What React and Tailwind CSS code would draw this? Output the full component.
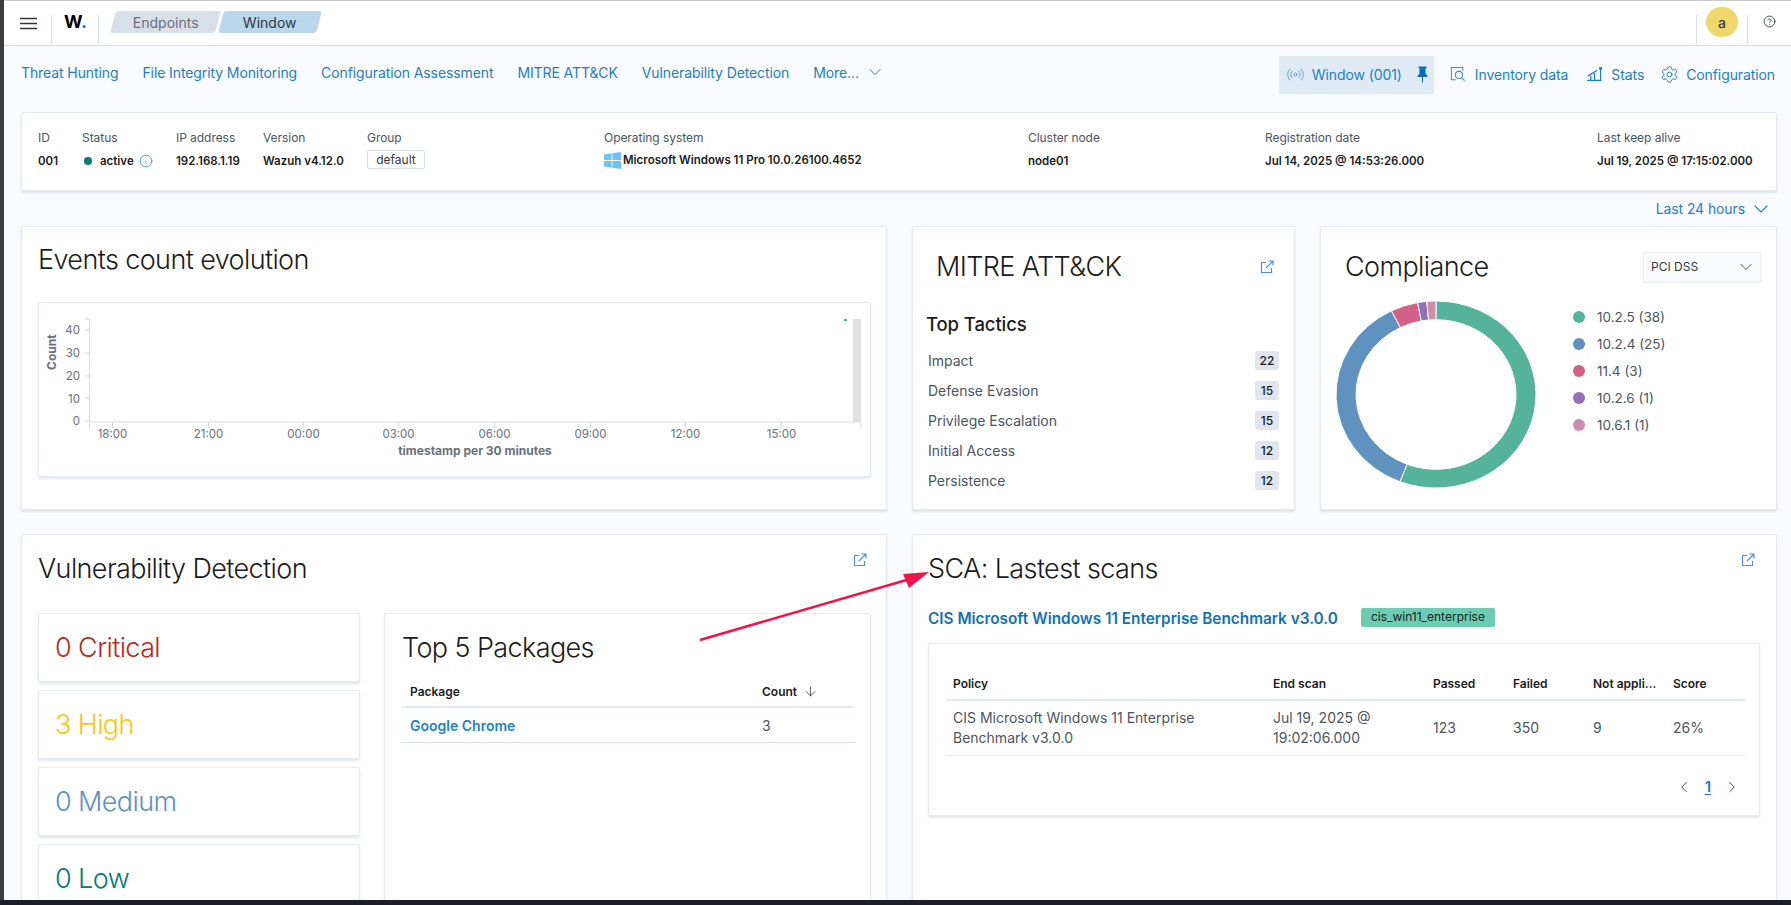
import { ChevronDown, ChevronLeft, ChevronRight, CircleHelp, Info, Radio, Settings, ArrowDown } from "lucide-react";

const navLinks = [
  "Threat Hunting",
  "File Integrity Monitoring",
  "Configuration Assessment",
  "MITRE ATT&CK",
  "Vulnerability Detection",
];

const tactics = [
  { name: "Impact", count: 22 },
  { name: "Defense Evasion", count: 15 },
  { name: "Privilege Escalation", count: 15 },
  { name: "Initial Access", count: 12 },
  { name: "Persistence", count: 12 },
];

const compliance = [
  { label: "10.2.5 (38)", value: 38, color: "#54B399" },
  { label: "10.2.4 (25)", value: 25, color: "#6092C0" },
  { label: "11.4 (3)", value: 3, color: "#D36086" },
  { label: "10.2.6 (1)", value: 1, color: "#9170B8" },
  { label: "10.6.1 (1)", value: 1, color: "#CA8EAE" },
];

const xTicks = [
  { x: 112, t: "18:00" },
  { x: 208, t: "21:00" },
  { x: 303, t: "00:00" },
  { x: 398, t: "03:00" },
  { x: 494, t: "06:00" },
  { x: 590, t: "09:00" },
  { x: 685, t: "12:00" },
  { x: 781, t: "15:00" },
];

const PopoutIcon = () => (
  <svg width="14" height="14" viewBox="0 0 14 14" fill="none" stroke="#4a94d0" strokeWidth="1.2">
    <path d="M6 2.5H1.5v10h10V8" />
    <path d="M6 8l6.5-6.5M8.5 1h4.5v4.5" />
  </svg>
);

const InventoryIcon = () => (
  <svg width="16" height="16" viewBox="0 0 17 17" fill="none" stroke="#3f8fcc" strokeWidth="1.1">
    <path d="M6 14.5H1.5V1.5h12V5" />
    <path d="M4 4h.01M6.5 4h.01M9 4h.01M11.5 4h.01M4 6.5h.01M4 9h.01M4 11.5h.01" strokeWidth="1.4" />
    <circle cx="9.5" cy="9.5" r="3.8" />
    <path d="M12.3 12.3l3.2 3.2" />
  </svg>
);

const StatsIcon = () => (
  <svg width="15" height="14" viewBox="0 0 16 15" fill="none" stroke="#1f7fc4" strokeWidth="1.3">
    <path d="M0 14.3h15.5M1 9.5l10-6M8 6.5v7.5M14.5 2v12" />
    <path d="M4 9v5" />
    <circle cx="14.5" cy="1.5" r="1" fill="#1f7fc4" />
  </svg>
);

const WindowsIcon = () => (
  <svg width="17" height="17" viewBox="0 0 17 17" fill="#6cc4f0">
    <path d="M0 2.4L7.6 1.3v6.8H0zM8.4 1.2L17 0v8.1H8.4zM0 8.9h7.6v6.8L0 14.6zM8.4 8.9H17V17l-8.6-1.2z" />
  </svg>
);

const Panel = ({ className, children }) => (
  <div className={`bg-white border border-[#e4e9f2] rounded-[2px] shadow-[0_2px_2px_rgba(152,162,179,0.25)] ${className}`}>
    {children}
  </div>
);

const Label = ({ children, className = "" }) => (
  <div className={`text-[12px] leading-[16px] text-[#4b5563] tracking-[-0.05px] ${className}`}>{children}</div>
);

const Value = ({ children, className = "" }) => (
  <div className={`text-[11.5px] leading-[16px] font-semibold text-[#1a1c21] ${className}`}>{children}</div>
);

const Title = ({ children, className = "" }) => (
  <h2 className={`text-[27px] leading-[32px] font-light text-[#1a1c21] tracking-[-0.6px] ${className}`}>{children}</h2>
);

const EventsChart = () => (
  <svg width="830" height="172" className="block">
    <g transform="translate(-39,-303)" fontFamily="Inter, sans-serif">
      <path d="M89.5 319V428M861 422v6" stroke="#d3dae6" fill="none" />
      <path d="M85 319h4M85 330h4M85 353h4M85 376h4M85 398h4M85 421h4" stroke="#d3dae6" />
      <path d="M90 422H861" stroke="#e6e9ef" strokeWidth="1.5" />
      {[40, 30, 20, 10, 0].map((v, i) => (
        <text key={v} x="80" y={[334, 357, 380, 403, 425][i]} fontSize="11.5" fill="#69707d" textAnchor="end">
          {v}
        </text>
      ))}
      {xTicks.map((tick) => (
        <g key={tick.t}>
          <path d={`M${tick.x + 0.5} 422v6`} stroke="#d3dae6" />
          <text x={tick.x + 0.5} y="438" fontSize="11.5" fill="#69707d" textAnchor="middle">
            {tick.t}
          </text>
        </g>
      ))}
      <rect x="853" y="319" width="8" height="103" fill="#e2e2e2" />
      <rect x="844" y="319" width="3" height="2" fill="#54B399" />
      <text x="475" y="455" fontSize="12" fontWeight="700" fill="#69707d" textAnchor="middle">
        timestamp per 30 minutes
      </text>
      <text transform="translate(56,370) rotate(-90)" fontSize="12" fontWeight="700" fill="#69707d">
        Count
      </text>
    </g>
  </svg>
);

const Donut = () => {
  const total = compliance.reduce((acc, item) => acc + item.value, 0);
  let angle = 0;
  const outer = 100;
  const inner = 80;
  const pt = (r, a) => [100 + r * Math.sin(a), 100 - r * Math.cos(a)];
  return (
    <svg width="200" height="187" viewBox="0 0 200 200" preserveAspectRatio="none" className="block">
      {compliance.map((item) => {
        const start = angle;
        const end = angle + (item.value / total) * Math.PI * 2;
        angle = end;
        const large = end - start > Math.PI ? 1 : 0;
        const [x1, y1] = pt(outer, start);
        const [x2, y2] = pt(outer, end);
        const [x3, y3] = pt(inner, end);
        const [x4, y4] = pt(inner, start);
        return (
          <path
            key={item.label}
            d={`M${x1} ${y1}A${outer} ${outer} 0 ${large} 1 ${x2} ${y2}L${x3} ${y3}A${inner} ${inner} 0 ${large} 0 ${x4} ${y4}Z`}
            fill={item.color}
            stroke="#fff"
            strokeWidth="1"
          />
        );
      })}
    </svg>
  );
};

const SeverityCard = ({ text, color, className = "" }) => (
  <Panel className={`h-[69px] flex items-center pl-[16px] ${className}`}>
    <span className={`text-[27px] font-light leading-[32px] tracking-[-0.6px] ${color}`}>{text}</span>
  </Panel>
);

export default function App() {
  return (
    <div
      className="relative h-[905px] overflow-hidden flex flex-col bg-[#f9fafd]"
      style={{ fontFamily: "Inter, 'Noto Sans', sans-serif" }}
    >
      <div className="flex flex-1 min-h-0">
        <div className="w-[4px] shrink-0 bg-[#3d3d3f]" />
        <div className="flex-1 min-w-0">
          {/* Top bar */}
          <div className="h-[46px] bg-white border-t border-[#c9c9c9] border-b border-b-[#d8dee9] flex items-center">
            <div className="w-[47px] flex justify-center pl-[1px]">
              <svg width="17" height="13" viewBox="0 0 17 13" stroke="#343741" strokeWidth="1.6">
                <path d="M0 1.5h17M0 6.5h17M0 11.5h17" />
              </svg>
            </div>
            <div className="h-[30px] border-l border-[#d8dee9] self-end w-[47px] relative">
              <span className="absolute -top-[8px] left-[12px] text-[18px] font-bold text-black leading-[30px]">
                W<span className="text-[#0a7cff]">.</span>
              </span>
            </div>
            <div className="h-[30px] border-l border-[#d8dee9] self-end" />
            <div className="flex ml-[14px] mb-[2px]">
              <div className="w-[105px] h-[22px] bg-[#d9dfe9] rounded-[3px] -skew-x-[15deg] flex items-center justify-center">
                <span className="skew-x-[15deg] text-[14px] text-[#69707d]">Endpoints</span>
              </div>
              <div className="w-[98px] h-[22px] bg-[#b9d6ea] rounded-[3px] -skew-x-[15deg] flex items-center justify-center ml-[3px]">
                <span className="skew-x-[15deg] text-[14px] text-[#343741]">Window</span>
              </div>
            </div>
            <div className="flex-1" />
            <div className="h-[30px] border-l border-[#d8dee9] self-end" />
            <div className="w-[50px] flex justify-center mb-[2px]">
              <div className="w-[32px] h-[30px] rounded-full bg-[#f0d76c] flex items-center justify-center text-[14px] font-medium text-[#343741]">
                a
              </div>
            </div>
            <div className="h-[30px] border-l border-[#d8dee9] self-end" />
            <div className="w-[43px] flex justify-center mb-[3px]">
              <CircleHelp size={13} color="#343741" strokeWidth={1.6} />
            </div>
          </div>

          {/* Nav */}
          <div className="h-[66px] flex items-start pt-[10px] pl-[17px] pr-[16px] text-[14px] tracking-[-0.1px] text-[#1f7fc4]">
            <div className="flex gap-[24px] items-center h-[32px]">
              {navLinks.map((link) => (
                <span key={link}>{link}</span>
              ))}
              <span className="flex items-center gap-[6px]">
                More...
                <ChevronDown size={20} strokeWidth={1.2} />
              </span>
            </div>
            <div className="flex-1" />
            <div className="flex items-center">
              <div className="h-[38px] w-[155px] bg-[#deebf5] flex items-center pl-[7px] pr-[5px] pb-[2px]">
                <Radio size={19} strokeWidth={1.2} color="#5a9fd4" />
                <span className="ml-[7px]">Window (001)</span>
                <div className="flex-1" />
                <svg width="13" height="17" viewBox="0 0 13 16" fill="#0b6fb8">
                  <path d="M2.5 0h8v1.5l-1 .5v5l2 2.5v1H1.5v-1l2-2.5V2l-1-.5zM6 10.5h1V16H6z" />
                </svg>
              </div>
              <span className="flex items-center gap-[9px] ml-[16px] -mt-[2px]">
                <InventoryIcon />
                Inventory data
              </span>
              <span className="flex items-center gap-[9px] ml-[19px] -mt-[2px]">
                <StatsIcon />
                Stats
              </span>
              <span className="flex items-center gap-[7px] ml-[16px] -mt-[2px]">
                <Settings size={19} strokeWidth={1.2} />
                Configuration
              </span>
            </div>
          </div>

          <div className="pl-[17px] pr-[14px]">
            {/* Agent info */}
            <Panel className="h-[79px] relative flex items-center pl-[16px] pb-[5px]">
              <div className="w-[44px]">
                <Label>ID</Label>
                <Value className="mt-[7px]">001</Value>
              </div>
              <div className="w-[94px]">
                <Label>Status</Label>
                <Value className="mt-[7px] flex items-center">
                  <span className="w-[8px] h-[8px] rounded-full bg-[#017d73] mr-[8px] ml-[2px]" />
                  active
                  <Info size={14} strokeWidth={1.2} color="#1f7fc4" className="ml-[5px]" />
                </Value>
              </div>
              <div className="w-[87px]">
                <Label>IP address</Label>
                <Value className="mt-[7px]">192.168.1.19</Value>
              </div>
              <div className="w-[104px]">
                <Label>Version</Label>
                <Value className="mt-[7px]">Wazuh v4.12.0</Value>
              </div>
              <div className="w-[237px]">
                <Label>Group</Label>
                <div className="mt-[4px] w-[58px] h-[19px] border border-[#d8dee9] rounded-[2px] text-[12px] leading-[17px] text-center text-[#343741]">
                  default
                </div>
              </div>
              <div className="w-[424px]">
                <Label>Operating system</Label>
                <Value className="mt-[6px] flex items-center gap-[2px]">
                  <WindowsIcon />
                  Microsoft Windows 11 Pro 10.0.26100.4652
                </Value>
              </div>
              <div className="w-[237px]">
                <Label>Cluster node</Label>
                <Value className="mt-[7px]">node01</Value>
              </div>
              <div className="w-[332px]">
                <Label>Registration date</Label>
                <Value className="mt-[7px]">Jul 14, 2025 @ 14:53:26.000</Value>
              </div>
              <div>
                <Label>Last keep alive</Label>
                <Value className="mt-[7px]">Jul 19, 2025 @ 17:15:02.000</Value>
              </div>
            </Panel>

            {/* Time range */}
            <div className="h-[35px] flex items-center justify-end pr-[4px] text-[14px] tracking-[-0.1px] text-[#1f7fc4] gap-[4px]">
              Last 24 hours
              <ChevronDown size={24} strokeWidth={1.1} />
            </div>

            {/* First row */}
            <div className="flex gap-[25px]">
              <Panel className="w-[866px] h-[284px] pl-[16px] pr-[15px] pt-[17px]">
                <Title>Events count evolution</Title>
                <Panel className="mt-[26px] h-[175px]">
                  <EventsChart />
                </Panel>
              </Panel>

              <Panel className="w-[383px] h-[284px] relative">
                <div className="pl-[23px] pt-[24px] pr-[20px] flex items-center justify-between">
                  <Title>MITRE ATT&amp;CK</Title>
                  <PopoutIcon />
                </div>
                <div className="pl-[14px] pr-[15px] mt-[29px]">
                  <div className="text-[18.5px] leading-[24px] font-medium tracking-[-0.1px] text-[#1a1c21] -ml-[1px]">Top Tactics</div>
                  <div className="mt-[9px] pl-[1px]">
                    {tactics.map((tactic) => (
                      <div key={tactic.name} className="h-[30px] flex items-center justify-between text-[14px] text-[#4b5563]">
                        <span>{tactic.name}</span>
                        <span className="w-[24px] h-[19px] bg-[#e0e5ee] rounded-[3px] text-[12px] font-medium leading-[19px] text-center text-[#1a1c21]">
                          {tactic.count}
                        </span>
                      </div>
                    ))}
                  </div>
                </div>
              </Panel>

              <Panel className="flex-1 h-[284px]">
                <div className="pl-[24px] pr-[15px] pt-[24px] flex items-center justify-between">
                  <Title>Compliance</Title>
                  <div className="w-[118px] h-[30px] bg-[#fbfcfd] border border-[#eef0f4] shadow-[0_1px_2px_rgba(152,162,179,0.2)] flex items-center justify-between pl-[7px] pr-[4px] text-[12px] text-[#343741]">
                    PCI DSS
                    <ChevronDown size={20} strokeWidth={1.1} />
                  </div>
                </div>
                <div className="flex pl-[15px] mt-[18px]">
                  <Donut />
                  <div className="ml-[37px] mt-[6px] flex flex-col gap-[7px]">
                    {compliance.map((item) => (
                      <div key={item.label} className="h-[20px] flex items-center text-[13.5px] text-[#4b5563]">
                        <span className="w-[12px] h-[12px] rounded-full mr-[12px]" style={{ backgroundColor: item.color }} />
                        {item.label}
                      </div>
                    ))}
                  </div>
                </div>
              </Panel>
            </div>

            {/* Second row */}
            <div className="flex gap-[25px] mt-[24px]">
              <Panel className="w-[866px] h-[400px] relative pl-[16px] pr-[15px] pt-[18px]">
                <div className="flex justify-between pr-[4px]">
                  <Title>Vulnerability Detection</Title>
                  <PopoutIcon />
                </div>
                <div className="flex gap-[24px] mt-[28px]">
                  <div className="w-[322px] flex flex-col gap-[8px]">
                    <SeverityCard text="0 Critical" color="text-[#bd271e]" />
                    <SeverityCard text="3 High" color="text-[#fec514]" />
                    <SeverityCard text="0 Medium" color="text-[#6092c0]" />
                    <SeverityCard text="0 Low" color="text-[#017d73]" />
                  </div>
                  <Panel className="flex-1 pl-[16px] pr-[15px] pt-[18px] h-[330px]">
                    <Title className="pl-[1px]">Top 5 Packages</Title>
                    <div className="mt-[13px] h-[31px] border-b-2 border-[#e4e9f2] flex items-center pl-[9px] text-[12px] font-semibold text-[#1a1c21]">
                      <span className="w-[352px]">Package</span>
                      <span className="flex items-center gap-[6px]">
                        Count <ArrowDown size={15} strokeWidth={1.1} />
                      </span>
                    </div>
                    <div className="h-[35px] border-b border-[#d8dee9] flex items-center pl-[9px] text-[14px] text-[#4b5563]">
                      <span className="w-[352px] text-[14px] font-semibold text-[#1f7fc4]">Google Chrome</span>
                      <span>3</span>
                    </div>
                  </Panel>
                </div>
              </Panel>

              <Panel className="flex-1 h-[400px] pl-[15px] pr-[16px] pt-[18px]">
                <div className="flex justify-between pr-[5px]">
                  <Title>SCA: Lastest scans</Title>
                  <PopoutIcon />
                </div>
                <div className="flex items-center mt-[22px]">
                  <span className="text-[15.35px] font-semibold text-[#0f72b8]">
                    CIS Microsoft Windows 11 Enterprise Benchmark v3.0.0
                  </span>
                  <span className="ml-[23px] -mt-[3px] h-[19px] w-[134px] bg-[#6dccb1] rounded-[2px] text-[12px] leading-[18px] text-center text-[#1a1c21]">
                    cis_win11_enterprise
                  </span>
                </div>
                <Panel className="mt-[13px] h-[173px] pl-[17px] pr-[14px] pt-[25px]">
                  <div className="h-[32px] border-b-2 border-[#e4e9f2] flex items-center pl-[7px] text-[12px] font-semibold text-[#1a1c21]">
                    <span className="w-[320px]">Policy</span>
                    <span className="w-[160px]">End scan</span>
                    <span className="w-[80px]">Passed</span>
                    <span className="w-[80px]">Failed</span>
                    <span className="w-[80px]">Not appli...</span>
                    <span>Score</span>
                  </div>
                  <div className="h-[55px] border-b border-[#e4e9f2] flex items-center pl-[7px] text-[14px] leading-[20px] text-[#4b5563]">
                    <span className="w-[320px]">
                      CIS Microsoft Windows 11 Enterprise
                      <br />
                      Benchmark v3.0.0
                    </span>
                    <span className="w-[160px]">
                      Jul 19, 2025 @
                      <br />
                      19:02:06.000
                    </span>
                    <span className="w-[80px]">123</span>
                    <span className="w-[80px]">350</span>
                    <span className="w-[80px]">9</span>
                    <span>26%</span>
                  </div>
                  <div className="flex justify-end items-center mt-[20px] pr-[4px] text-[#343741]">
                    <ChevronLeft size={18} strokeWidth={1.2} />
                    <span className="mx-[12px] text-[15px] font-semibold text-[#1f7fc4] underline underline-offset-2">1</span>
                    <ChevronRight size={18} strokeWidth={1.2} />
                  </div>
                </Panel>
              </Panel>
            </div>
          </div>
        </div>
      </div>
      <div className="h-[5px] shrink-0 bg-[#1b1d27] relative z-10" />

      {/* Annotation arrow drawn over the page */}
      <svg className="absolute left-0 top-0 pointer-events-none" width="1791" height="905">
        <path d="M700 640L910 579" stroke="#f2134a" strokeWidth="2.6" fill="none" />
        <path d="M929 572L903 574L909 588Z" fill="#f2134a" />
      </svg>
    </div>
  );
}
